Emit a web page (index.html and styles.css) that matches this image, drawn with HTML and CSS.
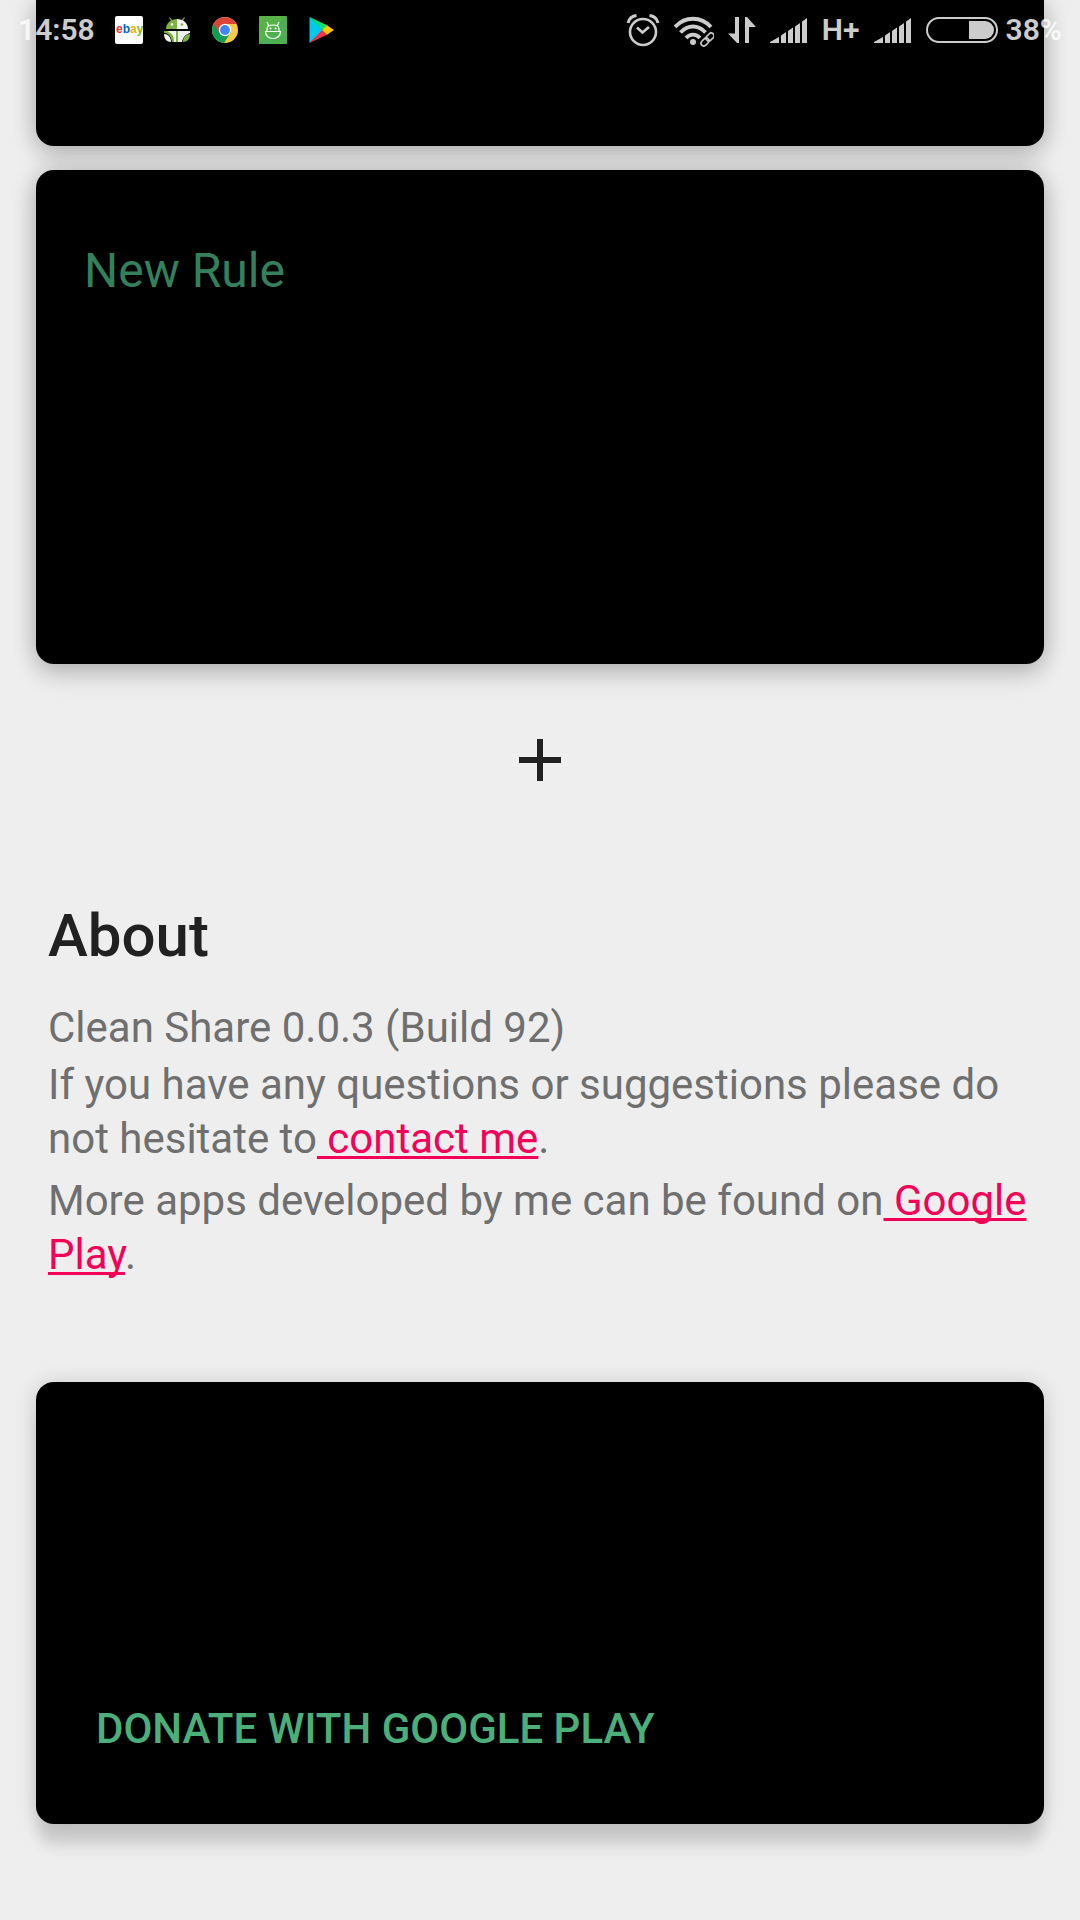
FILE: index.html
```html
<!DOCTYPE html>
<html lang="en">
<head>
<meta charset="utf-8">
<meta name="viewport" content="width=device-width, initial-scale=1">
<title>Clean Share</title>
<link rel="stylesheet" href="styles.css">
</head>
<body>
<header class="status">
  <div class="status-group notifications">
    <span class="clock">14:58</span>
    <svg class="app-icon" viewBox="0 0 28 28" role="img" aria-label="eBay">
      <rect width="28" height="28" rx="2" fill="#fff"/>
      <text x="1" y="17" font-family="Liberation Sans, Arial, sans-serif" font-size="12"><tspan fill="#e53238">e</tspan><tspan fill="#0064d2">b</tspan><tspan fill="#f5af02">a</tspan><tspan fill="#86b817">y</tspan></text>
    </svg>
    <svg class="app-icon" viewBox="0 0 28 28" aria-hidden="true">
      <path d="M9 5 6.500 1.500M19 5l2.500-3.500" stroke="#8bc34a" stroke-width="1.200" fill="none"/>
      <path d="M3 13C3 7 8 3 14 3v10z" fill="#7cb342"/><path d="M14 3c6 0 11 4 11 10H14z" fill="#f4f4f4"/>
      <circle cx="9" cy="8.500" r="1.300" fill="#fff"/><circle cx="19" cy="8.500" r="1.300" fill="#7cb342"/>
      <path d="M1 15h13v11h-5C8 20 5 17 1 17z" fill="#7cb342"/>
      <path d="M14 15h13v2c-4 1-7 4-8 9h-5z" fill="#eee"/>
      <path d="M1 18c4 0 7 3 7 8-4 0-7-3-7-8z" fill="#f4f4f4"/><path d="M27 18c-4 0-7 3-7 8 4 0 7-3 7-8z" fill="#7cb342"/>
      <path d="M5 16c4 1 6 4 6 10h2V15H6z" fill="#f4f4f4"/><path d="M13 15h2v11h-2z" fill="#7cb342"/>
    </svg>
    <svg class="app-icon" viewBox="0 0 28 28" role="img" aria-label="Chrome">
      <circle cx="14" cy="14" r="13" fill="#fbca3e"/>
      <path d="M14 14 2.740 7.500A13 13 0 0 0 13 26.960L20 16z" fill="#119d58"/>
      <path d="M2.740 7.500A13 13 0 0 1 25.300 8H14L8.500 17.500z" fill="#db4437"/>
      <circle cx="14" cy="14" r="6.200" fill="#fff"/><circle cx="14" cy="14" r="4.900" fill="#4285f4"/>
    </svg>
    <svg class="app-icon" viewBox="0 0 28 28" aria-hidden="true">
      <rect width="28" height="28" rx="1" fill="#4caf50"/><path d="M1 0h26L0 27V1z" fill="#5fb543" opacity=".6"/>
      <g fill="none" stroke="#fff" stroke-width="1.200"><path d="M6.500 15.500h15c0 4-3 7-7.500 7s-7.500-3-7.500-7zM8 15.500V13c0-2.500 2.500-4 6-4s6 1.500 6 4v2.500M9.500 9.500 8 6M18.500 9.500 20 6"/></g>
      <circle cx="11.500" cy="12.500" r="1" fill="#fff"/><circle cx="16.500" cy="12.500" r="1" fill="#fff"/>
    </svg>
    <svg class="app-icon" viewBox="0 0 28 28" role="img" aria-label="Google Play">
      <path d="M2.500 1v26L16 14z" fill="#00c9f0"/><path d="M2.500 1 20.500 9.500 15.500 14z" fill="#00e676"/>
      <path d="M2.500 27 20.500 18.500 15.500 14z" fill="#f43249"/><path d="M20 9.300 27 14l-7 4.700-4.800-4.700z" fill="#ffc900"/>
    </svg>
  </div>
  <div class="status-group system">
    <svg class="alarm" viewBox="0 0 34 34" role="img" aria-label="Alarm set">
      <g fill="none" stroke="currentColor" stroke-width="2.600"><circle cx="17" cy="19" r="13"/><path d="M11 14.500l5.500 5 6.500-5.500"/><path d="M2 10C3 6 6 3 10.500 2.500M32 10c-1-4-4-7-8.500-7.500" stroke-width="3"/></g>
    </svg>
    <svg class="wifi" viewBox="0 0 40 34" role="img" aria-label="Wi-Fi">
      <g fill="none" stroke="currentColor" stroke-width="3.800"><path d="M1 14C11 3 27 3 37 14M6.500 19.500C14 11.500 24 11.500 31.500 19.500M12 25c4-4.500 10-4.500 14 0"/></g>
      <circle cx="19" cy="29" r="3" fill="currentColor"/>
      <path d="M28 32l11-11" fill="none" stroke="#000" stroke-width="7"/>
      <g fill="none" stroke="currentColor" stroke-width="1.600"><rect x="-4.500" y="-2.800" width="9" height="5.600" rx="2.800" transform="translate(31 29) rotate(-45)"/><rect x="-4.500" y="-2.800" width="9" height="5.600" rx="2.800" transform="translate(36 24) rotate(-45)"/></g>
    </svg>
    <svg class="arrows" viewBox="0 0 28 26" aria-hidden="true"><path fill="currentColor" d="M7 0h4v26H9L0 16.500h7zM17 26V0h2l9 10h-7v16z"/></svg>
    <svg class="signal" viewBox="0 0 38 26" role="img" aria-label="Signal"><path fill="currentColor" d="M0 26v-1l9-5v6zM11 18.500l5-3.500v11h-5zM18 14l5-3.500V26h-5zM25 9.500 30 6v20h-5zM32 4.500 37 1v25h-5z"/></svg>
    <span class="network">H+</span>
    <svg class="signal" viewBox="0 0 38 26" role="img" aria-label="Signal"><path fill="currentColor" d="M0 26v-1l9-5v6zM11 18.500l5-3.500v11h-5zM18 14l5-3.500V26h-5zM25 9.500 30 6v20h-5zM32 4.500 37 1v25h-5z"/></svg>
    <span class="power">
      <svg class="battery" viewBox="0 0 72 26" role="img" aria-label="Battery"><rect x="1" y="1" width="70" height="24" rx="12" fill="none" stroke="currentColor" stroke-width="2"/><path fill="currentColor" d="M43 4h16a9 9 0 0 1 0 18H43z"/></svg>
      <span class="charge">38%</span>
    </span>
  </div>
</header>
<main class="page">
  <section class="card card-previous"></section>
  <section class="card card-rule">
    <h2 class="rule-title">New Rule</h2>
  </section>
  <button class="add" type="button" aria-label="Add rule">
    <svg class="add-icon" viewBox="0 0 42 42" aria-hidden="true"><path fill="#212121" d="M18 0h6v18h18v6H24v18h-6V24H0v-6h18z"/></svg>
  </button>
  <section class="about">
    <h1 class="about-title">About</h1>
    <p class="version">Clean Share 0.0.3 (Build 92)</p>
    <p class="contact">If you have any questions or suggestions please do not hesitate to<a class="link" href="#contact"> contact me</a>.</p>
    <p class="more">More apps developed by me can be found on<a class="link" href="#play"> Google Play</a>.</p>
  </section>
  <section class="card card-donate">
    <button class="donate" type="button">DONATE WITH GOOGLE PLAY</button>
  </section>
</main>
</body>
</html>
```
FILE: styles.css
```css
* { box-sizing: border-box; }

body {
  margin: 0;
  background: #eee;
  color: #6f6f6f;
  font-family: Roboto, "Noto Sans", sans-serif;
  font-size: 42px;
  line-height: 54px;
}

h1, h2, p { margin: 0; }

button {
  border: 0;
  background: none;
  font: inherit;
  cursor: pointer;
}

svg { display: block; flex: none; }

/* The status bar floats over the scrolled content. */
.status {
  position: absolute;
  top: 0;
  left: 0;
  right: 0;
  z-index: 1;
  height: 60px;
  padding: 0 18px;
  display: flex;
  justify-content: space-between;
  align-items: center;
  color: #fff;
  font-size: 30px;
  line-height: 60px;
  font-weight: 600;
}

.status-group { display: flex; align-items: center; }
.notifications { gap: 20px; }
.system { gap: 14px; opacity: .8; }
.power { display: flex; align-items: center; gap: 8px; }
.clock { opacity: .8; }
.app-icon { width: 28px; height: 28px; }
.alarm { width: 34px; height: 34px; }
.wifi { width: 40px; height: 34px; }
.arrows { width: 28px; height: 26px; }
.signal { width: 38px; height: 26px; }
.battery { width: 72px; height: 26px; }

.page {
  display: flex;
  flex-direction: column;
  padding: 0 36px 96px;
}

.card {
  border-radius: 18px;
  background: #000;
  box-shadow: 0 12px 24px rgba(0, 0, 0, .14), 0 0 24px rgba(0, 0, 0, .2);
}

.card-previous {
  min-height: 146px;
  border-radius: 0 0 18px 18px;
}

.card-rule {
  min-height: 494px;
  margin-top: 24px;
  padding: 73px 48px;
}

.rule-title {
  color: #32805c;
  font-size: 48px;
  font-weight: 400;
  line-height: 56px;
}

.add {
  align-self: center;
  margin-top: 24px;
  padding: 51px;
}

.add-icon { width: 42px; height: 42px; }

.about { margin-top: 64px; padding: 0 12px; }

.about-title {
  color: #212121;
  font-size: 60px;
  font-weight: 500;
  line-height: 80px;
}

.version { margin-top: 25px; }
.contact { margin-top: 3px; }
.more { margin-top: 8px; }

.link {
  color: #f50057;
  text-decoration-thickness: 3px;
  text-underline-offset: 3px;
  text-decoration-skip-ink: none;
}

.card-donate {
  display: flex;
  align-items: flex-end;
  min-height: 442px;
  margin-top: 100px;
  padding: 36px;
  box-shadow: 0 24px 14px -2px rgba(0, 0, 0, .12), 0 2px 22px rgba(0, 0, 0, .16);
}

.donate {
  padding: 32px 24px;
  color: #4caf7a;
  font-weight: 500;
}
```
